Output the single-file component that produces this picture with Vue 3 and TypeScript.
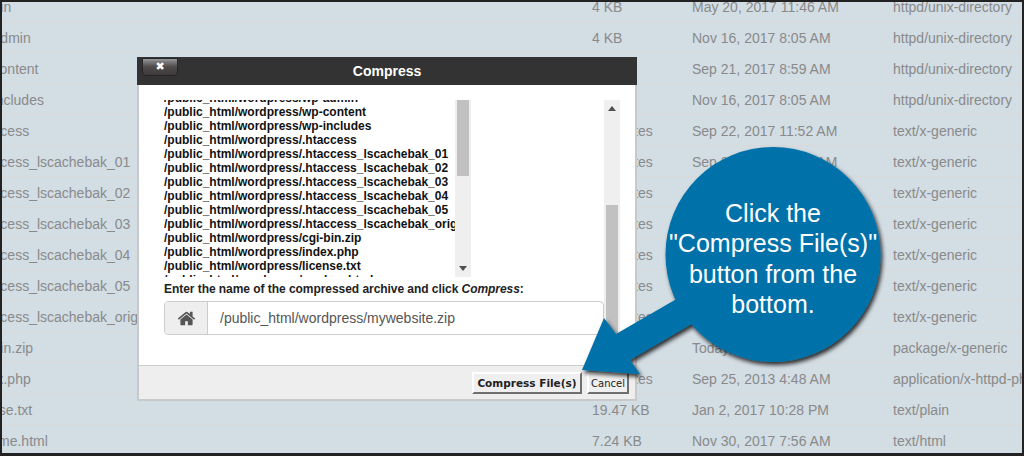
<script setup lang="ts">
interface FileRow {
  name: string
  size: string
  date: string
  type: string
}

const dir = 'httpd/unix-directory'
const gen = 'text/x-generic'

const rows: FileRow[] = [
  { name: 'cgi-bin', size: '4 KB', date: 'May 20, 2017 11:46 AM', type: dir },
  { name: 'wp-admin', size: '4 KB', date: 'Nov 16, 2017 8:05 AM', type: dir },
  { name: 'wp-content', size: '4 KB', date: 'Sep 21, 2017 8:59 AM', type: dir },
  { name: 'wp-includes', size: '4 KB', date: 'Nov 16, 2017 8:05 AM', type: dir },
  { name: '.htaccess', size: '634 bytes', date: 'Sep 22, 2017 11:52 AM', type: gen },
  { name: '.htaccess_lscachebak_01', size: '634 bytes', date: 'Sep 22, 2017 11:52 AM', type: gen },
  { name: '.htaccess_lscachebak_02', size: '634 bytes', date: 'Sep 22, 2017 11:52 AM', type: gen },
  { name: '.htaccess_lscachebak_03', size: '634 bytes', date: 'Sep 22, 2017 11:52 AM', type: gen },
  { name: '.htaccess_lscachebak_04', size: '634 bytes', date: 'Sep 22, 2017 11:52 AM', type: gen },
  { name: '.htaccess_lscachebak_05', size: '634 bytes', date: 'Sep 22, 2017 11:52 AM', type: gen },
  { name: '.htaccess_lscachebak_orig', size: '634 bytes', date: 'Sep 22, 2017 11:52 AM', type: gen },
  { name: 'cgi-bin.zip', size: '3 KB', date: 'Today, 8:14 AM', type: 'package/x-generic' },
  { name: 'index.php', size: '418 bytes', date: 'Sep 25, 2013 4:48 AM', type: 'application/x-httpd-php' },
  { name: 'license.txt', size: '19.47 KB', date: 'Jan 2, 2017 10:28 PM', type: 'text/plain' },
  { name: 'readme.html', size: '7.24 KB', date: 'Nov 30, 2017 7:56 AM', type: 'text/html' },
]

const base = '/public_html/wordpress/'
const selected: string[] = [
  'wp-admin',
  'wp-content',
  'wp-includes',
  '.htaccess',
  '.htaccess_lscachebak_01',
  '.htaccess_lscachebak_02',
  '.htaccess_lscachebak_03',
  '.htaccess_lscachebak_04',
  '.htaccess_lscachebak_05',
  '.htaccess_lscachebak_orig',
  'cgi-bin.zip',
  'index.php',
  'license.txt',
  'readme.html',
].map((n) => base + n)

const bubbleLines: string[] = ['Click the', '"Compress File(s)"', 'button from the', 'bottom.']
</script>

<template>
  <div class="frame">
    <div class="files">
      <div v-for="r in rows" :key="r.name" class="row">
        <span class="name">{{ r.name }}</span>
        <span class="size">{{ r.size }}</span>
        <span class="date">{{ r.date }}</span>
        <span class="type">{{ r.type }}</span>
      </div>
    </div>

    <section class="modal">
      <header class="title">
        <button class="close" type="button">✖</button>
        <span>Compress</span>
      </header>
      <div class="body">
        <div class="content">
          <div class="listbox">
            <div class="list">
              <div v-for="p in selected" :key="p" class="path">{{ p }}</div>
            </div>
            <div class="track inner">
              <i class="thumb"></i>
              <i class="arrow down"></i>
            </div>
          </div>
          <p class="label">Enter the name of the compressed archive and click <em>Compress</em>:</p>
          <div class="group">
            <span class="addon">
              <svg viewBox="0 0 1792 1792" width="19" height="19" aria-hidden="true">
                <path
                  fill="#555"
                  d="M1472 992v480q0 26-19 45t-45 19h-384v-384h-256v384h-384q-26 0-45-19t-19-45v-480q0-1 .5-3t.5-3l575-474 575 474q1 2 1 6zm223-69l-62 74q-8 9-21 11h-3q-13 0-21-7l-692-577-692 577q-12 8-24 7-13-2-21-11l-62-74q-8-10-7-23.5t11-21.5l719-599q32-26 76-26t76 26l244 204v-195q0-14 9-23t23-9h192q14 0 23 9t9 23v408l219 182q10 8 11 21.5t-7 23.5z"
                />
              </svg>
            </span>
            <span class="value">/public_html/wordpress/mywebsite.zip</span>
          </div>
        </div>
        <div class="track outer">
          <i class="arrow up"></i>
          <i class="thumb"></i>
        </div>
      </div>
      <footer class="foot">
        <button class="btn primary" type="button">Compress File(s)</button>
        <button class="btn cancel" type="button">Cancel</button>
      </footer>
    </section>

    <svg class="callout" viewBox="0 0 1024 456" width="1024" height="456" aria-hidden="true">
      <defs>
        <filter id="drop" x="-10%" y="-10%" width="125%" height="125%">
          <feDropShadow dx="2" dy="3" stdDeviation="2" flood-color="#000" flood-opacity="0.8" />
        </filter>
      </defs>
      <g filter="url(#drop)" fill="#0071a9">
        <circle cx="773" cy="254.5" r="107.5" />
        <path d="M582 370 L604 318 L616 334 L680 297 L695 322 L630 360 L640 374 Z" />
      </g>
    </svg>

    <div class="bubble">
      <div v-for="l in bubbleLines" :key="l">{{ l }}</div>
    </div>
  </div>
</template>

<style>
html,
body {
  margin: 0;
  background: #d2dde4;
}
</style>

<style scoped>
.frame {
  position: relative;
  box-sizing: border-box;
  width: 1024px;
  height: 456px;
  overflow: hidden;
  background: #d2dde4;
  font-family: "Liberation Sans", Arial, sans-serif;
}

.frame::after {
  content: "";
  position: absolute;
  inset: 0;
  border: 2px solid #222;
  border-bottom-width: 3px;
  pointer-events: none;
}

.files {
  margin: -9px 2px 0 0;
  overflow: hidden;
}

.row {
  box-sizing: border-box;
  height: 31px;
  display: grid;
  grid-template-columns: 622px 100px 201px 1fr;
  align-items: center;
  margin-left: -30px;
  padding-top: 2px;
  border-bottom: 1px solid #dbd9d7;
  font-size: 14px;
  color: #8a8a8a;
  white-space: nowrap;
}

.row > span {
  overflow: hidden;
}

.modal {
  position: absolute;
  left: 137px;
  top: 57px;
  width: 500px;
  height: 344px;
  box-sizing: border-box;
  display: flex;
  flex-direction: column;
  background: #fff;
  border: 2px solid #c9c9c9;
  border-top: 0;
}

.title {
  position: relative;
  height: 28px;
  margin: 0 -2px;
  flex: none;
  display: flex;
  align-items: center;
  justify-content: center;
  background: #333;
  color: #fff;
  font-size: 14px;
  font-weight: 700;
}

.close {
  position: absolute;
  left: 5px;
  top: 1px;
  width: 36px;
  height: 18px;
  padding: 0 0 1px;
  border: 1px solid #262626;
  border-top-width: 1px;
  border-radius: 0 0 4px 4px;
  background: linear-gradient(#9a9a9a 0, #7a7878 18%, #4f4a4a 50%, #3f3a3a 100%);
  color: #fff;
  font-size: 11px;
  line-height: 14px;
  font-family: "DejaVu Sans", sans-serif;
}

.body {
  flex: 1;
  min-height: 0;
  display: flex;
  padding: 15px 15px 0 25px;
}

.content {
  width: 440px;
  flex: none;
}

.listbox {
  display: flex;
  width: 307px;
  height: 177px;
  overflow: hidden;
}

.list {
  width: 291px;
  flex: none;
  margin-top: -9px;
  font-size: 12px;
  line-height: 14px;
  font-weight: 700;
  color: #111;
  white-space: nowrap;
  overflow: hidden;
}

.track {
  position: relative;
  width: 16px;
  flex: none;
  background: #efefef;
}

.thumb {
  position: absolute;
  left: 2px;
  width: 12px;
  background: #c1c1c1;
}

.inner .thumb {
  top: 0;
  height: 76px;
}

.outer .thumb {
  top: 105px;
  bottom: 0;
}

.arrow {
  position: absolute;
  left: 4px;
  width: 0;
  height: 0;
  border-left: 4px solid transparent;
  border-right: 4px solid transparent;
}

.arrow.up {
  top: 6px;
  border-bottom: 5px solid #505050;
}

.arrow.down {
  bottom: 6px;
  border-top: 5px solid #505050;
}

.label {
  margin: 5px 0 0;
  font-size: 12px;
  line-height: 14px;
  font-weight: 700;
  letter-spacing: -0.05px;
  color: #222;
}

.group {
  box-sizing: border-box;
  margin-top: 5px;
  height: 34px;
  display: flex;
  align-items: stretch;
  border: 1px solid #ccc;
  border-radius: 4px;
}

.addon {
  width: 42px;
  flex: none;
  display: flex;
  align-items: center;
  justify-content: center;
  background: #eee;
  border-right: 1px solid #ccc;
  border-radius: 3px 0 0 3px;
}

.value {
  align-self: center;
  padding-left: 12px;
  font-size: 14px;
  color: #555;
}

.foot {
  flex: none;
  height: 34px;
  box-sizing: border-box;
  display: flex;
  align-items: flex-start;
  gap: 5px;
  padding: 6px 0 0 333px;
  background: #eee;
  border-top: 1px solid #ccc;
}

.btn {
  height: 22px;
  padding: 0;
  background: #efefef;
  border: 2px solid;
  border-color: #fff #6f6f6f #6f6f6f #fff;
  color: #222;
}

.primary {
  width: 110px;
  font-family: "DejaVu Sans", sans-serif;
  font-weight: 700;
  font-size: 10.5px;
}

.cancel {
  width: 42px;
  font-family: "DejaVu Sans", sans-serif;
  font-size: 10px;
}

.callout {
  position: absolute;
  left: 0;
  top: 0;
  pointer-events: none;
}

.bubble {
  position: absolute;
  left: 665px;
  top: 198px;
  width: 216px;
  text-align: center;
  font-size: 25px;
  line-height: 30.3px;
  color: #fff;
  white-space: nowrap;
}
</style>
